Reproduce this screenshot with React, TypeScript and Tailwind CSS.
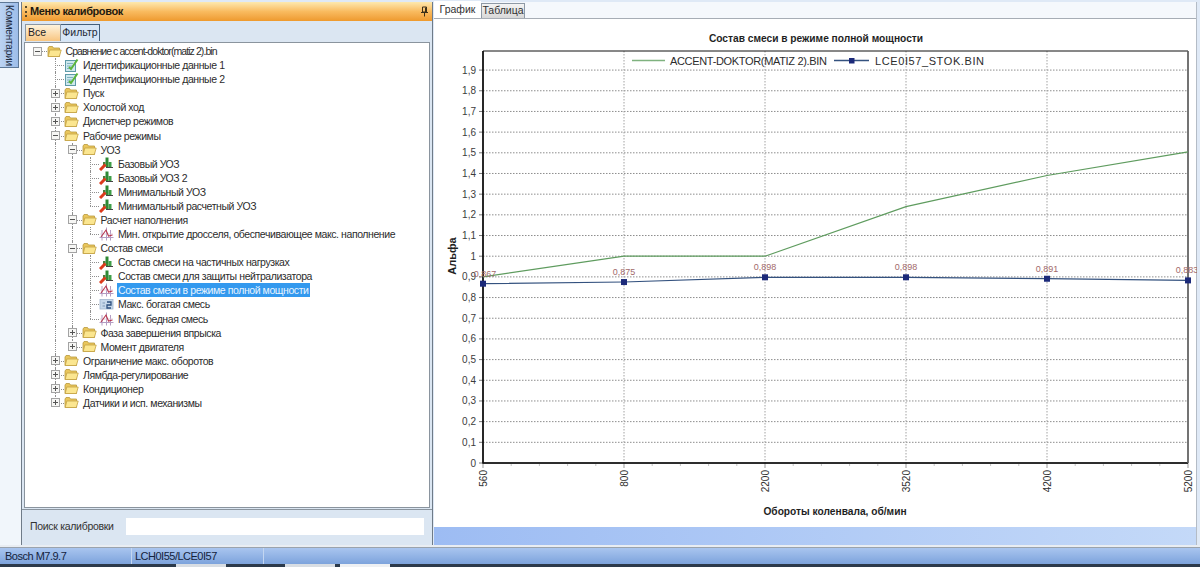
import type { ReactNode } from "react";

type IconKind = "folder" | "check" | "bars" | "graph" | "table";

type TreeNode = {
  label: string;
  icon: IconKind;
  open?: boolean;
  selected?: boolean;
  children?: TreeNode[];
};

const tree: TreeNode = {
  label: "Сравнение с accent-doktor(matiz 2).bin",
  icon: "folder",
  open: true,
  children: [
    { label: "Идентификационные данные 1", icon: "check" },
    { label: "Идентификационные данные 2", icon: "check" },
    { label: "Пуск", icon: "folder" },
    { label: "Холостой ход", icon: "folder" },
    { label: "Диспетчер режимов", icon: "folder" },
    {
      label: "Рабочие режимы",
      icon: "folder",
      open: true,
      children: [
        {
          label: "УОЗ",
          icon: "folder",
          open: true,
          children: [
            { label: "Базовый УОЗ", icon: "bars" },
            { label: "Базовый УОЗ 2", icon: "bars" },
            { label: "Минимальный УОЗ", icon: "bars" },
            { label: "Минимальный расчетный УОЗ", icon: "bars" },
          ],
        },
        {
          label: "Расчет наполнения",
          icon: "folder",
          open: true,
          children: [
            { label: "Мин. открытие дросселя, обеспечивающее макс. наполнение", icon: "graph" },
          ],
        },
        {
          label: "Состав смеси",
          icon: "folder",
          open: true,
          children: [
            { label: "Состав смеси на частичных нагрузках", icon: "bars" },
            { label: "Состав смеси для защиты нейтрализатора", icon: "bars" },
            { label: "Состав смеси в режиме полной мощности", icon: "graph", selected: true },
            { label: "Макс. богатая смесь", icon: "table" },
            { label: "Макс. бедная смесь", icon: "graph" },
          ],
        },
        { label: "Фаза завершения впрыска", icon: "folder" },
        { label: "Момент двигателя", icon: "folder" },
      ],
    },
    { label: "Ограничение макс. оборотов", icon: "folder" },
    { label: "Лямбда-регулирование", icon: "folder" },
    { label: "Кондиционер", icon: "folder" },
    { label: "Датчики и исп. механизмы", icon: "folder" },
  ],
};

function TreeIcon({ kind }: { kind: IconKind }) {
  if (kind === "folder") {
    return (
      <svg width="15" height="13" viewBox="0 0 15 13">
        <path d="M1 3 L2 1.5 H5.5 L6.5 3 H12.5 V11.5 H1 Z" fill="#e9c65c" stroke="#b9993c" strokeWidth="0.8" />
        <path d="M1.2 11.5 L2.8 5 H14.2 L12.4 11.5 Z" fill="#fbe690" stroke="#c4a245" strokeWidth="0.8" />
      </svg>
    );
  }
  if (kind === "check") {
    return (
      <svg width="15" height="14" viewBox="0 0 15 14">
        <rect x="1.5" y="2.5" width="10" height="11" fill="#cfe8ee" stroke="#5f9aa8" />
        <path d="M3 5.5 H9 M3 8 H8 M3 10.5 H7" stroke="#7fb2c0" />
        <path d="M5 9 L7 11 L13.5 1.5" fill="none" stroke="#5bb53a" strokeWidth="2" />
      </svg>
    );
  }
  if (kind === "bars") {
    return (
      <svg width="15" height="15" viewBox="0 0 15 15">
        <path d="M6.5 1.5 H9.5 V11 H6.5 Z" fill="#2f8a35" />
        <path d="M9.5 6 H12.5 V11 H9.5 Z" fill="#3f9f48" />
        <path d="M4 6 H6.5 V10 H4 Z" fill="#4b7b3c" />
        <path d="M1 14 L6.5 8.5" stroke="#dc3a1c" strokeWidth="3" />
        <path d="M7 11.5 H14" stroke="#444" />
      </svg>
    );
  }
  if (kind === "graph") {
    return (
      <svg width="15" height="14" viewBox="0 0 15 14">
        <path d="M0.5 10.5 H14.5 M3 13.5 V3 M7.5 13.5 V0.5 M11.5 13.5 V3" stroke="#b49cc2" strokeWidth="1" />
        <path d="M1 7 H14" stroke="#d9c7d6" strokeWidth="0.8" />
        <path d="M2 10 L7 3 L9.5 9 L13.5 8" fill="none" stroke="#b8364f" strokeWidth="1.1" />
      </svg>
    );
  }
  return (
    <svg width="15" height="14" viewBox="0 0 15 14">
      <rect x="1" y="2.5" width="13" height="9.5" fill="#c6d8ea" stroke="#9fb6cf" strokeWidth="0.8" />
      <path d="M3.5 6 H6 M3.5 9 H6" stroke="#7d97b5" />
      <path d="M8 5 H12 V8 H8 V11 H12" fill="none" stroke="#2c4f7e" strokeWidth="1.3" />
    </svg>
  );
}

function Expander({ open }: { open?: boolean }) {
  return (
    <svg width="9" height="9" viewBox="0 0 9 9" className="relative block">
      <rect x="0.5" y="0.5" width="8" height="8" fill="#f6f6f4" stroke="#a3a3a3" />
      <path d={open ? "M2 4.5 H7" : "M2 4.5 H7 M4.5 2 V7"} stroke="#555" />
    </svg>
  );
}

function TreeRows({
  node,
  guides,
  last,
  isRoot,
}: {
  node: TreeNode;
  guides: boolean[];
  last: boolean;
  isRoot?: boolean;
}) {
  const kids = node.children ?? [];
  const hasExpander = node.icon === "folder";
  return (
    <>
      <div className="flex h-[14.08px] items-center">
        {guides.map((g, i) => (
          <span key={i} className="relative h-full w-[17.5px] shrink-0">
            {g && <span className="absolute top-0 bottom-0 left-[8px] border-l border-dotted border-[#8f8f8f]" />}
          </span>
        ))}
        <span className="relative flex h-full w-[17.5px] shrink-0 items-center justify-center">
          {!isRoot && (
            <span
              className={`absolute top-0 left-[8px] border-l border-dotted border-[#8f8f8f] ${last ? "h-1/2" : "bottom-0"}`}
            />
          )}
          <span className="absolute top-1/2 right-0 left-[8px] border-t border-dotted border-[#8f8f8f]" />
          {hasExpander && <Expander open={node.open} />}
        </span>
        <span className="flex w-[15px] shrink-0 justify-center">
          <TreeIcon kind={node.icon} />
        </span>
        <span
          className={`ml-[3px] px-[1px] leading-[14px] whitespace-nowrap ${
            isRoot ? "tracking-[-0.93px]" : "tracking-[-0.42px]"
          } ${node.selected ? "bg-[#3399ee] text-[#e8f4ff]" : "text-[#2c2c2c]"}`}
        >
          {node.label}
        </span>
      </div>
      {node.open &&
        kids.map((kid, i) => (
          <TreeRows
            key={kid.label}
            node={kid}
            guides={[...guides, !last && !isRoot ? true : false]}
            last={i === kids.length - 1}
          />
        ))}
    </>
  );
}

const yTicks = Array.from({ length: 20 }, (_, i) => i);
const xPoints = [483, 624, 765, 906, 1047, 1188];
const xLabels = ["560", "800", "2200", "3520", "4200", "5200"];
const valueY = (v: number) => 463 - v * 206.8;
const green = [0.9, 1, 1, 1.24, 1.39, 1.505];
const blue = [0.867, 0.875, 0.898, 0.898, 0.891, 0.883];
const blueLabels = ["0,867", "0,875", "0,898", "0,898", "0,891", "0,883"];

function poly(values: number[]) {
  return values.map((v, i) => `${xPoints[i]},${valueY(v).toFixed(1)}`).join(" ");
}

function Chart() {
  const font = "'Liberation Sans', Arial, sans-serif";
  return (
    <svg viewBox="434 19 763 508" className="block h-[508px] w-[763px]" fontFamily={font}>
      <text x="816" y="42" textAnchor="middle" fontSize="10.2" fontWeight="700" fill="#1f1f1f">
        Состав смеси в режиме полной мощности
      </text>

      {yTicks.slice(1).map((i) => (
        <line
          key={i}
          x1="483"
          x2="1188"
          y1={valueY(i / 10)}
          y2={valueY(i / 10)}
          stroke="#8d8d8d"
          strokeDasharray="1.5 1.5"
        />
      ))}
      {xPoints.slice(1, 5).map((x) => (
        <line key={x} x1={x} x2={x} y1="51" y2="463" stroke="#a2a2a2" strokeDasharray="1.5 1.5" />
      ))}

      {yTicks.map((i) => (
        <g key={i}>
          <line x1="479" x2="483" y1={valueY(i / 10)} y2={valueY(i / 10)} stroke="#777" />
          <text x="476" y={valueY(i / 10) + 3.5} textAnchor="end" fontSize="10" fill="#3c3c3c">
            {i === 10 ? "1" : String(i / 10).replace(".", ",")}
          </text>
        </g>
      ))}

      {xPoints.map((x, i) => (
        <g key={x}>
          <line x1={x} x2={x} y1="463" y2="468" stroke="#999" />
          {i < 5 &&
            [1, 2, 3, 4].map((k) => (
              <line
                key={k}
                x1={x + k * 28.2}
                x2={x + k * 28.2}
                y1="464"
                y2="466"
                stroke="#c4c4c4"
              />
            ))}
          <text
            transform={`translate(${x + 3.5} 470) rotate(-90)`}
            textAnchor="end"
            fontSize="10"
            fill="#2f2f2f"
          >
            {xLabels[i]}
          </text>
        </g>
      ))}

      <path d="M483 51 H1188 V463 H483 Z" fill="none" stroke="#111" strokeWidth="1" />
      <path d="M483 51 V463 H1188" fill="none" stroke="#111" strokeWidth="1.6" />
      <line x1="1188" x2="1188" y1="51" y2="463" stroke="#6b6b6b" strokeWidth="1.4" />

      <polyline points={poly(green)} fill="none" stroke="#5f9c5f" strokeWidth="1.2" />
      <polyline points={poly(blue)} fill="none" stroke="#34527f" strokeWidth="1.2" />
      {xPoints.map((x, i) => (
        <g key={x}>
          <rect x={x - 3} y={valueY(blue[i]) - 3} width="6" height="6" fill="#1c2a7a" />
          <text
            x={x + (i === 0 ? 2 : i === 5 ? -1 : 0)}
            y={valueY(blue[i]) - 7}
            textAnchor="middle"
            fontSize="9"
            fill="#a26a6a"
          >
            {blueLabels[i]}
          </text>
        </g>
      ))}

      <line x1="632" x2="665" y1="60.5" y2="60.5" stroke="#7fb27f" strokeWidth="1.4" />
      <text x="670" y="64.5" fontSize="11" fill="#2c2c2c" textLength="157" lengthAdjust="spacing">
        ACCENT-DOKTOR(MATIZ 2).BIN
      </text>
      <line x1="834" x2="869" y1="60.5" y2="60.5" stroke="#34527f" strokeWidth="1.4" />
      <rect x="849" y="58" width="5.5" height="5.5" fill="#1c2a7a" />
      <text x="875" y="64.5" fontSize="11" fill="#2c2c2c" textLength="109" lengthAdjust="spacing">
        LCE0I57_STOK.BIN
      </text>

      <text x="835" y="514.5" textAnchor="middle" fontSize="10.2" fontWeight="700" fill="#1f1f1f">
        Обороты коленвала, об/мин
      </text>
      <text
        transform="translate(456 256) rotate(-90)"
        textAnchor="middle"
        fontSize="11"
        fontWeight="700"
        fill="#1f1f1f"
      >
        Альфа
      </text>
    </svg>
  );
}

function Tab({ active, children, className }: { active?: boolean; children: ReactNode; className: string }) {
  return (
    <div
      className={`flex items-center justify-center border-[#8e99a5] ${
        active ? "bg-white text-[#333]" : "border border-b-0 bg-gradient-to-b from-[#f4f4f4] to-[#d8d8d8] text-[#333]"
      } ${className}`}
    >
      {children}
    </div>
  );
}

export default function App() {
  return (
    <div className="flex h-[567px] w-[1200px] flex-col overflow-hidden bg-[#dfe9f6] font-['Liberation_Sans',Arial,sans-serif] text-[10.5px]">
      <div className="flex h-[545px] shrink-0 pt-[2px]">
        {/* Collapsed comments tab */}
        <div className="w-[21px] shrink-0 bg-[#f1f6fb]">
          <div className="flex h-[66px] w-[19px] items-center justify-center border border-l-0 border-[#5d7897] bg-gradient-to-r from-[#bcd3f2] to-[#9dbde9]">
            <span className="text-[10px] tracking-[-0.2px] whitespace-nowrap text-[#1d2b3f] [writing-mode:vertical-rl]">
              Комментарии
            </span>
          </div>
        </div>

        {/* Calibration menu */}
        <div className="flex w-[412px] shrink-0 flex-col border-x border-[#6f7b88] bg-[#dbe6f2]">
          <div className="flex h-[19px] shrink-0 items-center bg-gradient-to-b from-[#fde9ae] via-[#f9bb5f] to-[#ee9a2c]">
            <span className="ml-[3px] flex h-[13px] flex-col justify-between py-[1px]">
              <span className="h-[2px] w-[2px] bg-[#5a4a2a]" />
              <span className="h-[2px] w-[2px] bg-[#5a4a2a]" />
              <span className="h-[2px] w-[2px] bg-[#5a4a2a]" />
            </span>
            <span className="ml-[3px] text-[11px] font-bold tracking-[-0.4px] text-[#1f1a10]">Меню калибровок</span>
            <svg width="9" height="11" viewBox="0 0 9 11" className="mr-[3px] ml-auto">
              <path d="M2.5 1 H6.5 V6 H2.5 Z M1 6.5 H8 M4.5 7 V10.5 M5.5 1.5 V6" fill="none" stroke="#3a2f18" />
            </svg>
          </div>

          <div className="flex h-[21px] shrink-0 items-end pl-[3px]">
            <div className="mb-[1px] flex h-[17px] w-[36px] items-center border border-b-0 border-[#8b97a3] bg-gradient-to-b from-[#fdf3dc] to-[#f8c57f] pl-[2px] text-[#222]">
              Все
            </div>
            <div className="mb-[1px] flex h-[17px] w-[39px] items-center justify-center border border-b-0 border-l-0 border-[#44607d] bg-[#d6e6f7] text-[#1f2a36]">
              Фильтр
            </div>
          </div>

          <div className="mx-[2px] h-[466px] shrink-0 overflow-hidden border border-[#8a949e] bg-white pt-[1px] pl-[4px]">
            <TreeRows node={tree} guides={[]} last isRoot />
          </div>

          <div className="mt-[1px] flex min-h-0 flex-1 items-center border-t border-[#8a949e] pr-[8px] pb-[2px] pl-[8px]">
            <span className="w-[96px] shrink-0 tracking-[-0.3px] text-[#333]">Поиск калибровки</span>
            <div className="h-[17px] flex-1 bg-white" />
          </div>
        </div>

        {/* Chart area */}
        <div className="ml-[1px] flex w-[763px] shrink-0 flex-col border-r border-[#b4bcc6] bg-white">
          <div className="flex h-[17px] shrink-0 items-end border-b border-[#a7adb5] bg-[#f5f8fc]">
            <Tab active className="h-[17px] w-[47px]">
              График
            </Tab>
            <Tab className="h-[15px] w-[44px]">Таблица</Tab>
          </div>
          <Chart />
          <div className="min-h-0 flex-1 bg-gradient-to-r from-[#9dbcf3] to-[#c4d9f8]" />
        </div>
      </div>

      <div className="h-[3px] shrink-0 border-b border-[#9aa3ad] bg-[#e9edf2]" />

      {/* Status bar */}
      <div className="flex h-[16px] shrink-0 items-center bg-gradient-to-b from-[#a9c5ef] to-[#7da3dc] text-[11px] tracking-[-0.5px] text-[#14233c]">
        <div className="h-full w-[132px] border-r border-[#c3d6f1] pl-[5px] leading-[16px]">Bosch M7.9.7</div>
        <div className="h-full w-[132px] border-r border-[#c3d6f1] pl-[3px] leading-[16px]">LCH0I55/LCE0I57</div>
      </div>

      {/* Taskbar edge */}
      <div className="flex h-[3px] shrink-0 bg-[#2c3a4b]">
        <div className="ml-[176px] w-[50px] bg-[#d8dde3]" />
        <div className="ml-[59px] w-[50px] bg-[#d8dde3]" />
        <div className="ml-[5px] w-[50px] bg-[#eef0f3]" />
      </div>
    </div>
  );
}
